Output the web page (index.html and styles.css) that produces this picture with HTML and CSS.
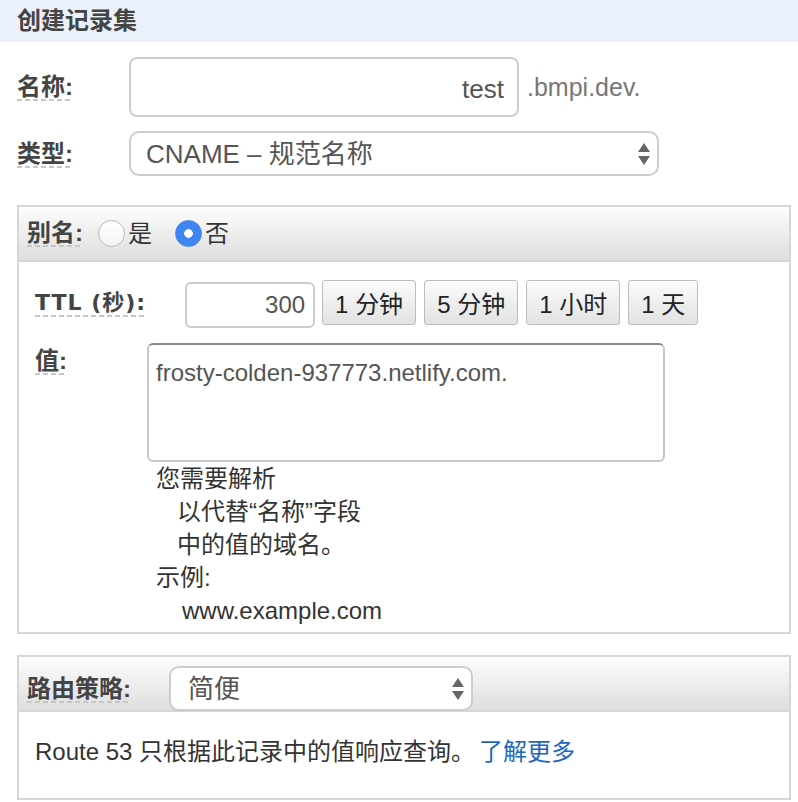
FILE: index.html
```html
<!DOCTYPE html>
<html lang="zh-CN">
<head>
  <meta charset="UTF-8" />
  <meta name="viewport" content="width=device-width, initial-scale=1.0"/>
  <title>创建记录集</title>
  <link rel="stylesheet" href="styles.css">
</head>
<body>
  <h2 class="page-title">创建记录集</h2>

  <div class="field name-field">
    <label class="field-label" for="recordName"><span class="hint">名称:</span></label>
    <input type="text" id="recordName" class="name-input" value="test">
    <span class="suffix">.bmpi.dev.</span>
  </div>

  <div class="field type-field">
    <label class="field-label" for="recordType"><span class="hint">类型:</span></label>
    <div class="select-wrap type-select">
      <select id="recordType">
        <option>CNAME – 规范名称</option>
      </select>
      <svg class="arrows" width="12" height="22" viewBox="0 0 12 22"><polygon points="6,0 12,9 0,9"/><polygon points="0,13 12,13 6,22"/></svg>
    </div>
  </div>

  <!-- Alias / TTL / value -->
  <div class="panel alias-panel">
    <div class="panel-head">
      <span class="hint">别名:</span>
      <label class="radio"><input type="radio" name="alias">是</label>
      <label class="radio radio-no"><input type="radio" name="alias" checked>否</label>
    </div>
    <div class="panel-body">
      <div class="ttl-row">
        <span class="hint ttl-label">TTL (秒):</span>
        <input type="text" class="ttl-input" value="300">
        <div class="ttl-buttons">
          <button type="button">1 分钟</button>
          <button type="button">5 分钟</button>
          <button type="button">1 小时</button>
          <button type="button">1 天</button>
        </div>
      </div>
      <div class="value-row">
        <div class="value-label"><span class="hint">值:</span></div>
        <div>
          <textarea class="value-input">frosty-colden-937773.netlify.com.</textarea>
          <div class="help">
            <div>您需要解析</div>
            <div class="indent">以代替“名称”字段</div>
            <div class="indent">中的值的域名。</div>
            <div>示例:</div>
            <div class="example">www.example.com</div>
          </div>
        </div>
      </div>
    </div>
  </div>

  <!-- Routing policy -->
  <div class="panel route-panel">
    <div class="panel-head route-head">
      <label class="route-label" for="routing"><span class="hint">路由策略:</span></label>
      <div class="select-wrap route-select">
        <select id="routing">
          <option>简便</option>
        </select>
        <svg class="arrows" width="12" height="22" viewBox="0 0 12 22"><polygon points="6,0 12,9 0,9"/><polygon points="0,13 12,13 6,22"/></svg>
      </div>
    </div>
    <div class="panel-body route-body">
      Route 53 只根据此记录中的值响应查询。<a href="#">了解更多</a>
    </div>
  </div>
</body>
</html>
```

FILE: styles.css
```css
body {
  margin: 0;
  font-family: "Liberation Sans", "Noto Sans CJK SC", sans-serif;
  font-size: 24px;
  color: #333;
  background: #fff;
}

.page-title {
  margin: 0;
  height: 42px;
  line-height: 42px;
  padding-left: 17px;
  background: #eaf1fb;
  font-size: 24px;
  font-weight: bold;
  color: #444;
}

.hint {
  display: inline-block;
  font-weight: bold;
  color: #444;
  line-height: 26px;
  padding-bottom: 1px;
  background: linear-gradient(to right, #c6c6c6 5px, transparent 5px) left bottom / 8px 2px repeat-x;
}

.field {
  display: flex;
  align-items: center;
  padding-left: 17px;
}

.name-field {
  margin-top: 15px;
}

.type-field {
  margin-top: 14px;
}

.field-label {
  width: 112px;
  flex: none;
}

input, select, textarea, button {
  font-family: inherit;
  box-sizing: border-box;
}

.name-input {
  width: 390px;
  height: 60px;
  border: 2px solid #ccc;
  border-radius: 8px;
  padding: 4px 13px 0;
  text-align: right;
  font-size: 26px;
  color: #555;
  outline: none;
}

.suffix {
  margin-left: 8px;
  font-size: 25px;
  color: #777;
}

.select-wrap {
  position: relative;
}

.select-wrap select {
  appearance: none;
  -webkit-appearance: none;
  width: 100%;
  height: 100%;
  border: 2px solid #ccc;
  border-radius: 10px;
  background: #fff;
  padding: 0 40px 0 15px;
  font-size: 26px;
  color: #555;
  outline: none;
}

.select-wrap .arrows {
  position: absolute;
  right: 9px;
  top: 12px;
  fill: #666;
  pointer-events: none;
}

.type-select {
  width: 530px;
  height: 45px;
}

.panel {
  margin: 29px 7px 0 17px;
  border: 2px solid #d6d6d6;
}

.panel-head {
  display: flex;
  align-items: center;
  box-sizing: border-box;
  height: 55px;
  padding: 0 8px;
  background: linear-gradient(#fdfdfd, #dedede);
  border-bottom: 2px solid #d6d6d6;
}

.radio {
  display: inline-flex;
  align-items: center;
  gap: 3px;
  margin-left: 15px;
  color: #333;
  line-height: 26px;
}

.radio-no {
  margin-left: 23px;
}

.radio input {
  appearance: none;
  -webkit-appearance: none;
  margin: 0;
  width: 27px;
  height: 27px;
  border-radius: 50%;
  border: 1px solid #b8b8b8;
  background: linear-gradient(#fff, #f4f4f4);
}

.radio input:checked {
  border-color: #3f86f2;
  background: radial-gradient(circle, #fff 0 4px, #3f86f2 4.6px);
}

.panel-body {
  padding: 18px 16px 5px;
}

.ttl-row {
  display: flex;
  align-items: flex-start;
}

.ttl-label {
  font-family: "DejaVu Sans", "Noto Sans CJK SC", sans-serif;
  font-size: 22px;
  letter-spacing: 1px;
  margin-top: 10px;
  margin-right: 39px;
}

.ttl-input {
  margin-top: 2px;
  width: 130px;
  height: 46px;
  border: 2px solid #ccc;
  border-radius: 6px;
  padding: 0 8px;
  text-align: right;
  font-size: 24px;
  color: #555;
  outline: none;
}

.ttl-buttons {
  display: flex;
  gap: 8px;
  margin-left: 7px;
}

.ttl-buttons button {
  height: 45px;
  padding: 0 12px;
  border: 1px solid #bdbdbd;
  border-radius: 3px;
  background: linear-gradient(#fbfbfb, #e2e2e2);
  font-size: 24px;
  color: #222;
}

.value-row {
  display: grid;
  grid-template-columns: 112px auto;
  margin-top: 15px;
}

.value-label {
  padding-top: 4px;
}

.value-input {
  display: block;
  width: 518px;
  height: 119px;
  margin: 0;
  border: 2px solid #c8c8c8;
  border-top-color: #8a8a8a;
  border-radius: 6px;
  padding: 12px 7px;
  line-height: 32px;
  font-size: 24px;
  color: #555;
  resize: none;
  outline: none;
}

.help {
  margin-left: 9px;
  line-height: 33px;
  color: #333;
}

.help .indent {
  padding-left: 21px;
}

.help .example {
  padding-left: 26px;
}

.route-panel {
  margin-top: 21px;
}

.route-head {
  padding-top: 10px;
}

.route-label {
  width: 142px;
  flex: none;
}

.route-select {
  width: 304px;
  height: 45px;
}

.route-select select {
  padding-left: 17px;
}

.route-body {
  padding: 23px 16px 30px;
  line-height: 33px;
  color: #333;
}

.route-body a {
  margin-left: 4px;
  color: #2066c2;
  text-decoration: none;
}
```
